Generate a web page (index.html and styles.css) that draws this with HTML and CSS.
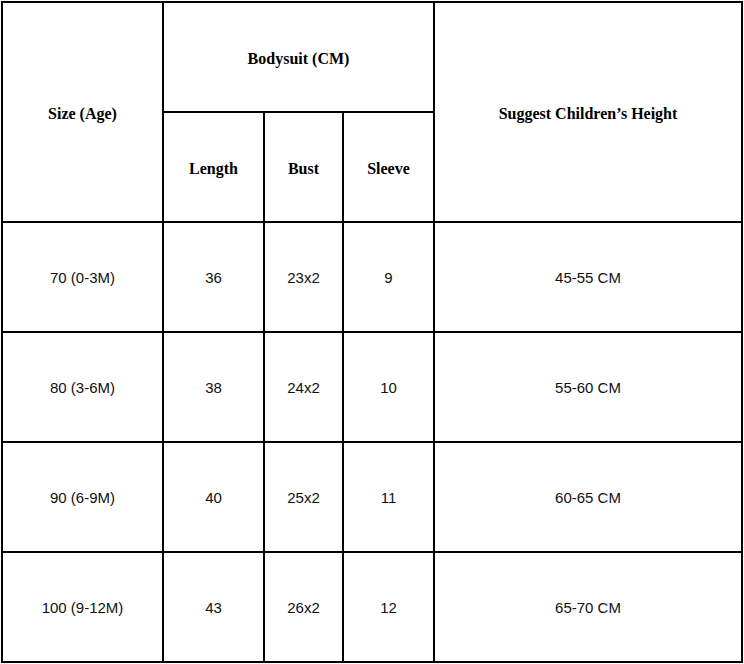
FILE: index.html
```html
<!DOCTYPE html>
<html>
<head>
<meta charset="utf-8">
<link rel="stylesheet" href="styles.css">
</head>
<body>
<div class="chart">
  <div class="cell head size">Size (Age)</div>
  <div class="cell head body">Bodysuit (CM)</div>
  <div class="cell head height">Suggest Children’s Height</div>
  <div class="cell head">Length</div>
  <div class="cell head">Bust</div>
  <div class="cell head">Sleeve</div>

  <div class="cell">70 (0-3M)</div>
  <div class="cell">36</div>
  <div class="cell">23x2</div>
  <div class="cell">9</div>
  <div class="cell">45-55 CM</div>

  <div class="cell">80 (3-6M)</div>
  <div class="cell">38</div>
  <div class="cell">24x2</div>
  <div class="cell">10</div>
  <div class="cell">55-60 CM</div>

  <div class="cell">90 (6-9M)</div>
  <div class="cell">40</div>
  <div class="cell">25x2</div>
  <div class="cell">11</div>
  <div class="cell">60-65 CM</div>

  <div class="cell">100 (9-12M)</div>
  <div class="cell">43</div>
  <div class="cell">26x2</div>
  <div class="cell">12</div>
  <div class="cell">65-70 CM</div>
</div>
</body>
</html>
```
FILE: styles.css
```css
html, body {
  margin: 0;
  padding: 0;
  background: #ffffff;
}
.chart {
  margin: 1px 0 0 1px;
  width: 742px;
  box-sizing: border-box;
  display: grid;
  grid-template-columns: 161px 101px 79px 91px 308px;
  grid-auto-rows: 110px;
  border-left: 2px solid #000;
  border-top: 2px solid #000;
}
.cell {
  box-sizing: border-box;
  border-right: 2px solid #000;
  border-bottom: 2px solid #000;
  display: flex;
  align-items: center;
  justify-content: center;
  font-family: "Liberation Sans", Arial, sans-serif;
  font-size: 15px;
  color: #111;
}
.head {
  padding-top: 3px;
  font-family: "Liberation Serif", "Times New Roman", serif;
  font-weight: bold;
  font-size: 16px;
  color: #000;
}
.size {
  grid-row: 1 / span 2;
  grid-column: 1;
}
.body {
  grid-row: 1;
  grid-column: 2 / span 3;
}
.height {
  grid-row: 1 / span 2;
  grid-column: 5;
}
```
